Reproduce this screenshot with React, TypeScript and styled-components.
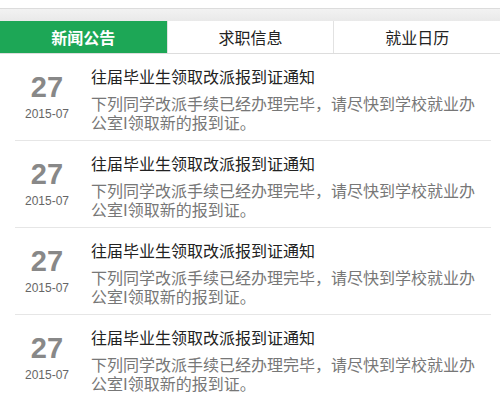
import styled, { createGlobalStyle } from "styled-components";
import { useState } from "react";

const tabs = ["新闻公告", "求职信息", "就业日历"];

const news = Array.from({ length: 4 }, () => ({
  day: "27",
  month: "2015-07",
  title: "往届毕业生领取改派报到证通知",
  desc: "下列同学改派手续已经办理完毕，请尽快到学校就业办公室I领取新的报到证。",
}));

export default function App() {
  const [active, setActive] = useState(0);
  return (
    <Page>
      <GlobalStyle />
      <TopBand />
      <TabBar>
        {tabs.map((t, i) => (
          <Tab key={t} $active={i === active} onClick={() => setActive(i)}>
            {t}
          </Tab>
        ))}
      </TabBar>
      <List>
        {news.map((n, i) => (
          <Row key={i}>
            <DateCol>
              <Day>{n.day}</Day>
              <Month>{n.month}</Month>
            </DateCol>
            <Body>
              <Title>{n.title}</Title>
              <Desc>{n.desc}</Desc>
            </Body>
          </Row>
        ))}
      </List>
    </Page>
  );
}

const GlobalStyle = createGlobalStyle`
  * {
    box-sizing: border-box;
  }
  body {
    margin: 0;
    background: #fff;
    font-family: "Noto Sans CJK SC", "Liberation Sans", sans-serif;
  }
`;

const Page = styled.div`
  width: 500px;
  height: 400px;
  overflow: hidden;
`;

const TopBand = styled.div`
  margin-top: 8px;
  height: 13px;
  border-top: 1px solid #dcdcdc;
  background: linear-gradient(#f2f2f2, #e9e9e9);
`;

const TabBar = styled.div`
  display: grid;
  grid-template-columns: repeat(3, 1fr);
  height: 33px;
  border-bottom: 1px solid #dddddd;
`;

const Tab = styled.div<{ $active: boolean }>`
  display: flex;
  align-items: center;
  justify-content: center;
  font-size: 16px;
  cursor: pointer;
  background: ${(p) => (p.$active ? "#1da756" : "#fff")};
  color: ${(p) => (p.$active ? "#fff" : "#222")};
  font-weight: ${(p) => (p.$active ? 700 : 400)};
  & + & {
    border-left: 1px solid #e2e2e2;
  }
`;

const List = styled.div`
  display: flex;
  flex-direction: column;
`;

const Row = styled.div`
  display: flex;
  gap: 12px;
  margin: 0 9px 0 15px;
  padding: 12px 10px 0 0;
  height: 87px;
  flex-shrink: 0;
  border-bottom: 1px solid #e6e6e6;
`;

const DateCol = styled.div`
  width: 64px;
  flex-shrink: 0;
  display: flex;
  flex-direction: column;
  align-items: center;
  padding-top: 6px;
`;

const Day = styled.div`
  font-family: "Liberation Sans", Arial, sans-serif;
  font-weight: 700;
  font-size: 29px;
  line-height: 30px;
  color: #888;
`;

const Month = styled.div`
  font-family: "Liberation Sans", Arial, sans-serif;
  font-size: 12px;
  line-height: 16px;
  margin-top: 4px;
  color: #666;
`;

const Body = styled.div`
  flex: 1;
  min-width: 0;
`;

const Title = styled.div`
  font-size: 16px;
  line-height: 20px;
  color: #222;
`;

const Desc = styled.div`
  margin-top: 8px;
  font-size: 16px;
  line-height: 19px;
  color: #777;
`;
